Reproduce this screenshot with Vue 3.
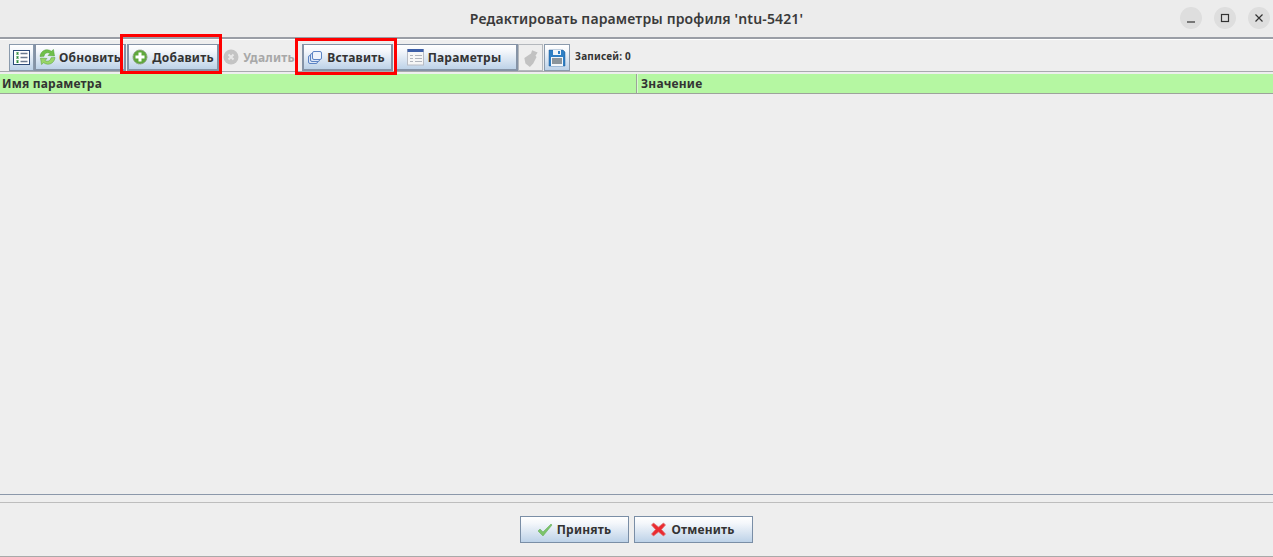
<script setup>
const columns = [
  { name: 'Имя параметра', cls: 'col-name' },
  { name: 'Значение', cls: 'col-value' }
]
</script>

<template>
  <div class="win">
    <header class="titlebar">
      <div class="title">Редактировать параметры профиля 'ntu-5421'</div>
      <div class="controls">
        <span class="wbtn"><svg width="16" height="16" viewBox="0 0 16 16"><path d="M4 12h8" stroke="#333" stroke-width="1.2" fill="none"/></svg></span>
        <span class="wbtn"><svg width="16" height="16" viewBox="0 0 16 16"><rect x="4.500" y="4.500" width="7" height="7" stroke="#333" stroke-width="1.2" fill="none"/></svg></span>
        <span class="wbtn"><svg width="16" height="16" viewBox="0 0 16 16"><path d="M4.500 4.500l7 7M11.500 4.500l-7 7" stroke="#333" stroke-width="1.2" fill="none"/></svg></span>
      </div>
    </header>

    <div class="toolbar">
      <button class="btn icon-btn">
        <svg width="17" height="17" viewBox="0 0 17 17">
          <rect x=".5" y="1.500" width="16" height="14" fill="#fff" stroke="#2c4a78"/>
          <path d="M3.500 3.500l2 2M5.500 3.500l-2 2M3.500 7.500l2 2M5.500 7.500l-2 2M3.500 11.500l2 2M5.500 11.500l-2 2" stroke="#2e8b3c" stroke-width="1.100" fill="none"/>
          <path d="M7.500 4.500h7M7.500 8.500h7M7.500 12.500h7" stroke="#6c7a90" stroke-width="1.400"/>
        </svg>
      </button>
      <button class="btn w-refresh">
        <svg width="17" height="18" viewBox="0 0 17 18">
          <path d="M1 8.500C1.500 4 5 1.500 8.500 1.800c1.500.1 2.800.7 3.800 1.500L14.500 1.500l1 6.500-6.500-.5 2-2c-1.800-1.300-5.500-1-6 2.800z" fill="#6fc04a" stroke="#4f9c35" stroke-width=".5"/>
          <path d="M16 9.500c-.5 4.500-4 7-7.500 6.700-1.500-.1-2.800-.7-3.800-1.500L2.500 16.500l-1-6.500 6.500.5-2 2c1.800 1.300 5.500 1 6-2.800z" fill="#9ad668" stroke="#4f9c35" stroke-width=".5"/>
        </svg>
        <span>Обновить</span>
      </button>
      <button class="btn w-add">
        <svg width="16" height="16" viewBox="0 0 16 16">
          <circle cx="8" cy="8" r="7" fill="#5fa83c" stroke="#8b9a80" stroke-dasharray="1.500 .5"/>
          <path d="M8 3.500v9M3.500 8h9" stroke="#fff" stroke-width="3"/>
        </svg>
        <span>Добавить</span>
      </button>
      <button class="btn flat w-del">
        <svg width="16" height="16" viewBox="0 0 16 16">
          <circle cx="8" cy="8" r="7.500" fill="#c4c4c4"/>
          <path d="M5.500 5.500l5 5M10.500 5.500l-5 5" stroke="#e8e8e8" stroke-width="2"/>
        </svg>
        <span>Удалить</span>
      </button>
      <button class="btn w-paste">
        <svg width="16" height="16" viewBox="0 0 16 16">
          <rect x="1.500" y="6.500" width="9" height="8" rx="1.500" fill="#dce6f6" stroke="#5c84c4"/>
          <rect x="3.500" y="4.500" width="9" height="8" rx="1.500" fill="#dce6f6" stroke="#5c84c4"/>
          <rect x="5.500" y="2.500" width="9" height="8" rx="1.500" fill="#eef3fb" stroke="#5c84c4"/>
        </svg>
        <span>Вставить</span>
      </button>
      <button class="btn w-params">
        <svg width="17" height="18" viewBox="0 0 17 18">
          <rect x=".5" y="1.500" width="16" height="15.500" fill="#f6f6f6" stroke="#b8bcc4"/>
          <rect x=".5" y="1" width="16" height="3" fill="#3d5fa8"/>
          <path d="M3 7.500h3M3 10.500h3M3 13.500h3M8 7.500h7M8 10.500h7M8 13.500h7" stroke="#b0b4bc"/>
        </svg>
        <span>Параметры</span>
      </button>
      <button class="btn flat-box icon-btn">
        <svg width="18" height="20" viewBox="0 0 16 18">
          <path d="M2 9l6-4 1-3 5 2-2 3 1 1-3 6-3 3-4-3z" fill="#c2c2c2"/>
        </svg>
      </button>
      <button class="btn icon-btn save">
        <svg width="18" height="18" viewBox="0 0 18 18">
          <path d="M1 1h14l2 2v14H1z" fill="#2f7fc4" stroke="#1e5a94" stroke-width=".5"/>
          <rect x="5" y="1" width="8" height="5" fill="#f2f6fa"/>
          <rect x="10" y="2" width="2" height="3" fill="#2f7fc4"/>
          <rect x="3" y="8" width="12" height="9" fill="#f2f6fa"/>
          <path d="M4 10h10M4 12h10M4 14h10" stroke="#24343f"/>
        </svg>
      </button>
      <span class="count">Записей: 0</span>
    </div>

    <div class="thead">
      <div v-for="c in columns" :key="c.name" class="th" :class="c.cls">{{ c.name }}</div>
    </div>

    <div class="body"></div>

    <div class="splitter"></div>

    <footer class="footer">
      <button class="btn dlg w-ok">
        <svg width="16" height="14" viewBox="0 0 16 14">
          <path d="M1 8l2-2 3 3 8-8 1 1-9 11z" fill="#7cc46a" stroke="#5fa855" stroke-width=".5"/>
        </svg>
        <span>Принять</span>
      </button>
      <button class="btn dlg w-cancel">
        <svg width="15" height="15" viewBox="0 0 15 15">
          <path d="M2.500 1l5 4 5-4 2 2-4 4.500 4 4.500-2 2-5-4-5 4-2-2 4-4.500-4-4.500z" fill="#ea2a30" stroke="#e0787a" stroke-width=".8" stroke-linejoin="round"/>
        </svg>
        <span>Отменить</span>
      </button>
    </footer>

    <div class="mark mark-add"></div>
    <div class="mark mark-paste"></div>
  </div>
</template>

<style scoped>
.win {
  position: relative;
  width: 1273px;
  height: 557px;
  background: #eeeeee;
  display: flex;
  flex-direction: column;
  overflow: hidden;
  font-family: "Noto Sans", sans-serif;
}
.titlebar {
  height: 37px;
  flex: none;
  display: flex;
  align-items: center;
  justify-content: center;
  position: relative;
  background: #ececec;
  border-bottom: 2px solid #9a9ea6;
  box-sizing: content-box;
}
.title {
  font-family: "Noto Sans", sans-serif;
  font-size: 14px;
  font-weight: 600;
  color: #3a3a3a;
  letter-spacing: 0.15px;
}
.controls {
  position: absolute;
  right: 3px;
  top: 7px;
  display: flex;
  gap: 12px;
}
.wbtn {
  width: 22px;
  height: 22px;
  border-radius: 50%;
  background: #dedede;
  display: flex;
  align-items: center;
  justify-content: center;
}
.toolbar {
  height: 33px;
  flex: none;
  display: flex;
  align-items: flex-start;
  padding: 4px 0 0 9px;
  box-sizing: border-box;
  border-top: 1px solid #fff;
  border-bottom: 1px solid #a8aaae;
}
.btn {
  height: 27px;
  box-sizing: border-box;
  margin: 0;
  padding: 0;
  border: 2px solid #8593a6;
  border-width: 1px 2px 2px 2px;
  background: linear-gradient(#ffffff 0%, #f4f7fb 25%, #bdd2e8 100%);
  display: flex;
  align-items: center;
  justify-content: center;
  gap: 4px;
  font-family: "Noto Sans", sans-serif;
  font-size: 12px;
  font-weight: 700;
  letter-spacing: 0.2px;
  color: #333;
  white-space: nowrap;
  flex: none;
}
.icon-btn { width: 25px; border-width: 1px; border-color: #8a9aac; }
.save { width: 26px; margin-left: 1px; }
.w-refresh { width: 92px; margin-left: 0; justify-content: flex-start; padding-left: 3px; gap: 3px; }
.w-add { width: 92px; margin-left: 1px; }
.flat {
  width: 80px;
  margin-left: 1px;
  padding-right: 2px;
  background: none;
  border-color: transparent;
  color: #a8a8a8;
}
.w-paste { width: 91px; margin-left: 2px; padding-right: 3px; }
.w-params { width: 122px; margin-left: 3px; border-left: none; padding-right: 4px; }
.flat-box { background: #eeeeee; border-color: #b4b8bd; }
.count {
  margin-left: 5px;
  line-height: 25px;
  font-size: 10px;
  font-weight: 700;
  letter-spacing: 0.2px;
  color: #333;
}
.thead {
  margin-top: 2px;
  height: 20px;
  flex: none;
  display: flex;
  background: #b5f7a2;
  border-bottom: 1px solid #9da39b;
  box-sizing: border-box;
}
.th {
  font-size: 12px;
  font-weight: 700;
  letter-spacing: 0.2px;
  color: #333;
  line-height: 19px;
  white-space: nowrap;
}
.col-name { width: 637px; padding-left: 2px; box-sizing: border-box; border-right: 1px solid #9da39b; }
.col-value { flex: 1; padding-left: 3px; border-left: 1px solid #d8fbd0; }
.body { flex: 1; background: #eeeeee; }
.splitter {
  flex: none;
  height: 9px;
  box-sizing: border-box;
  border-top: 1px solid #8b98aa;
  border-bottom: 1px solid #bdbdbd;
}
.footer {
  flex: none;
  height: 54px;
  box-sizing: border-box;
  border-bottom: 1px solid #a9a9a9;
  display: flex;
  justify-content: center;
  gap: 5px;
  padding-top: 13px;
}
.dlg { height: 27px; border: 1px solid #7a8ea6; gap: 4px; padding-right: 1px; }
.w-ok { width: 109px; }
.w-cancel { width: 119px; gap: 5px; }
.mark {
  position: absolute;
  border: 3px solid #f00;
  box-sizing: border-box;
  pointer-events: none;
}
.mark-add { left: 120px; top: 34px; width: 102px; height: 40px; }
.mark-paste { left: 295px; top: 38px; width: 102px; height: 37px; }
</style>
